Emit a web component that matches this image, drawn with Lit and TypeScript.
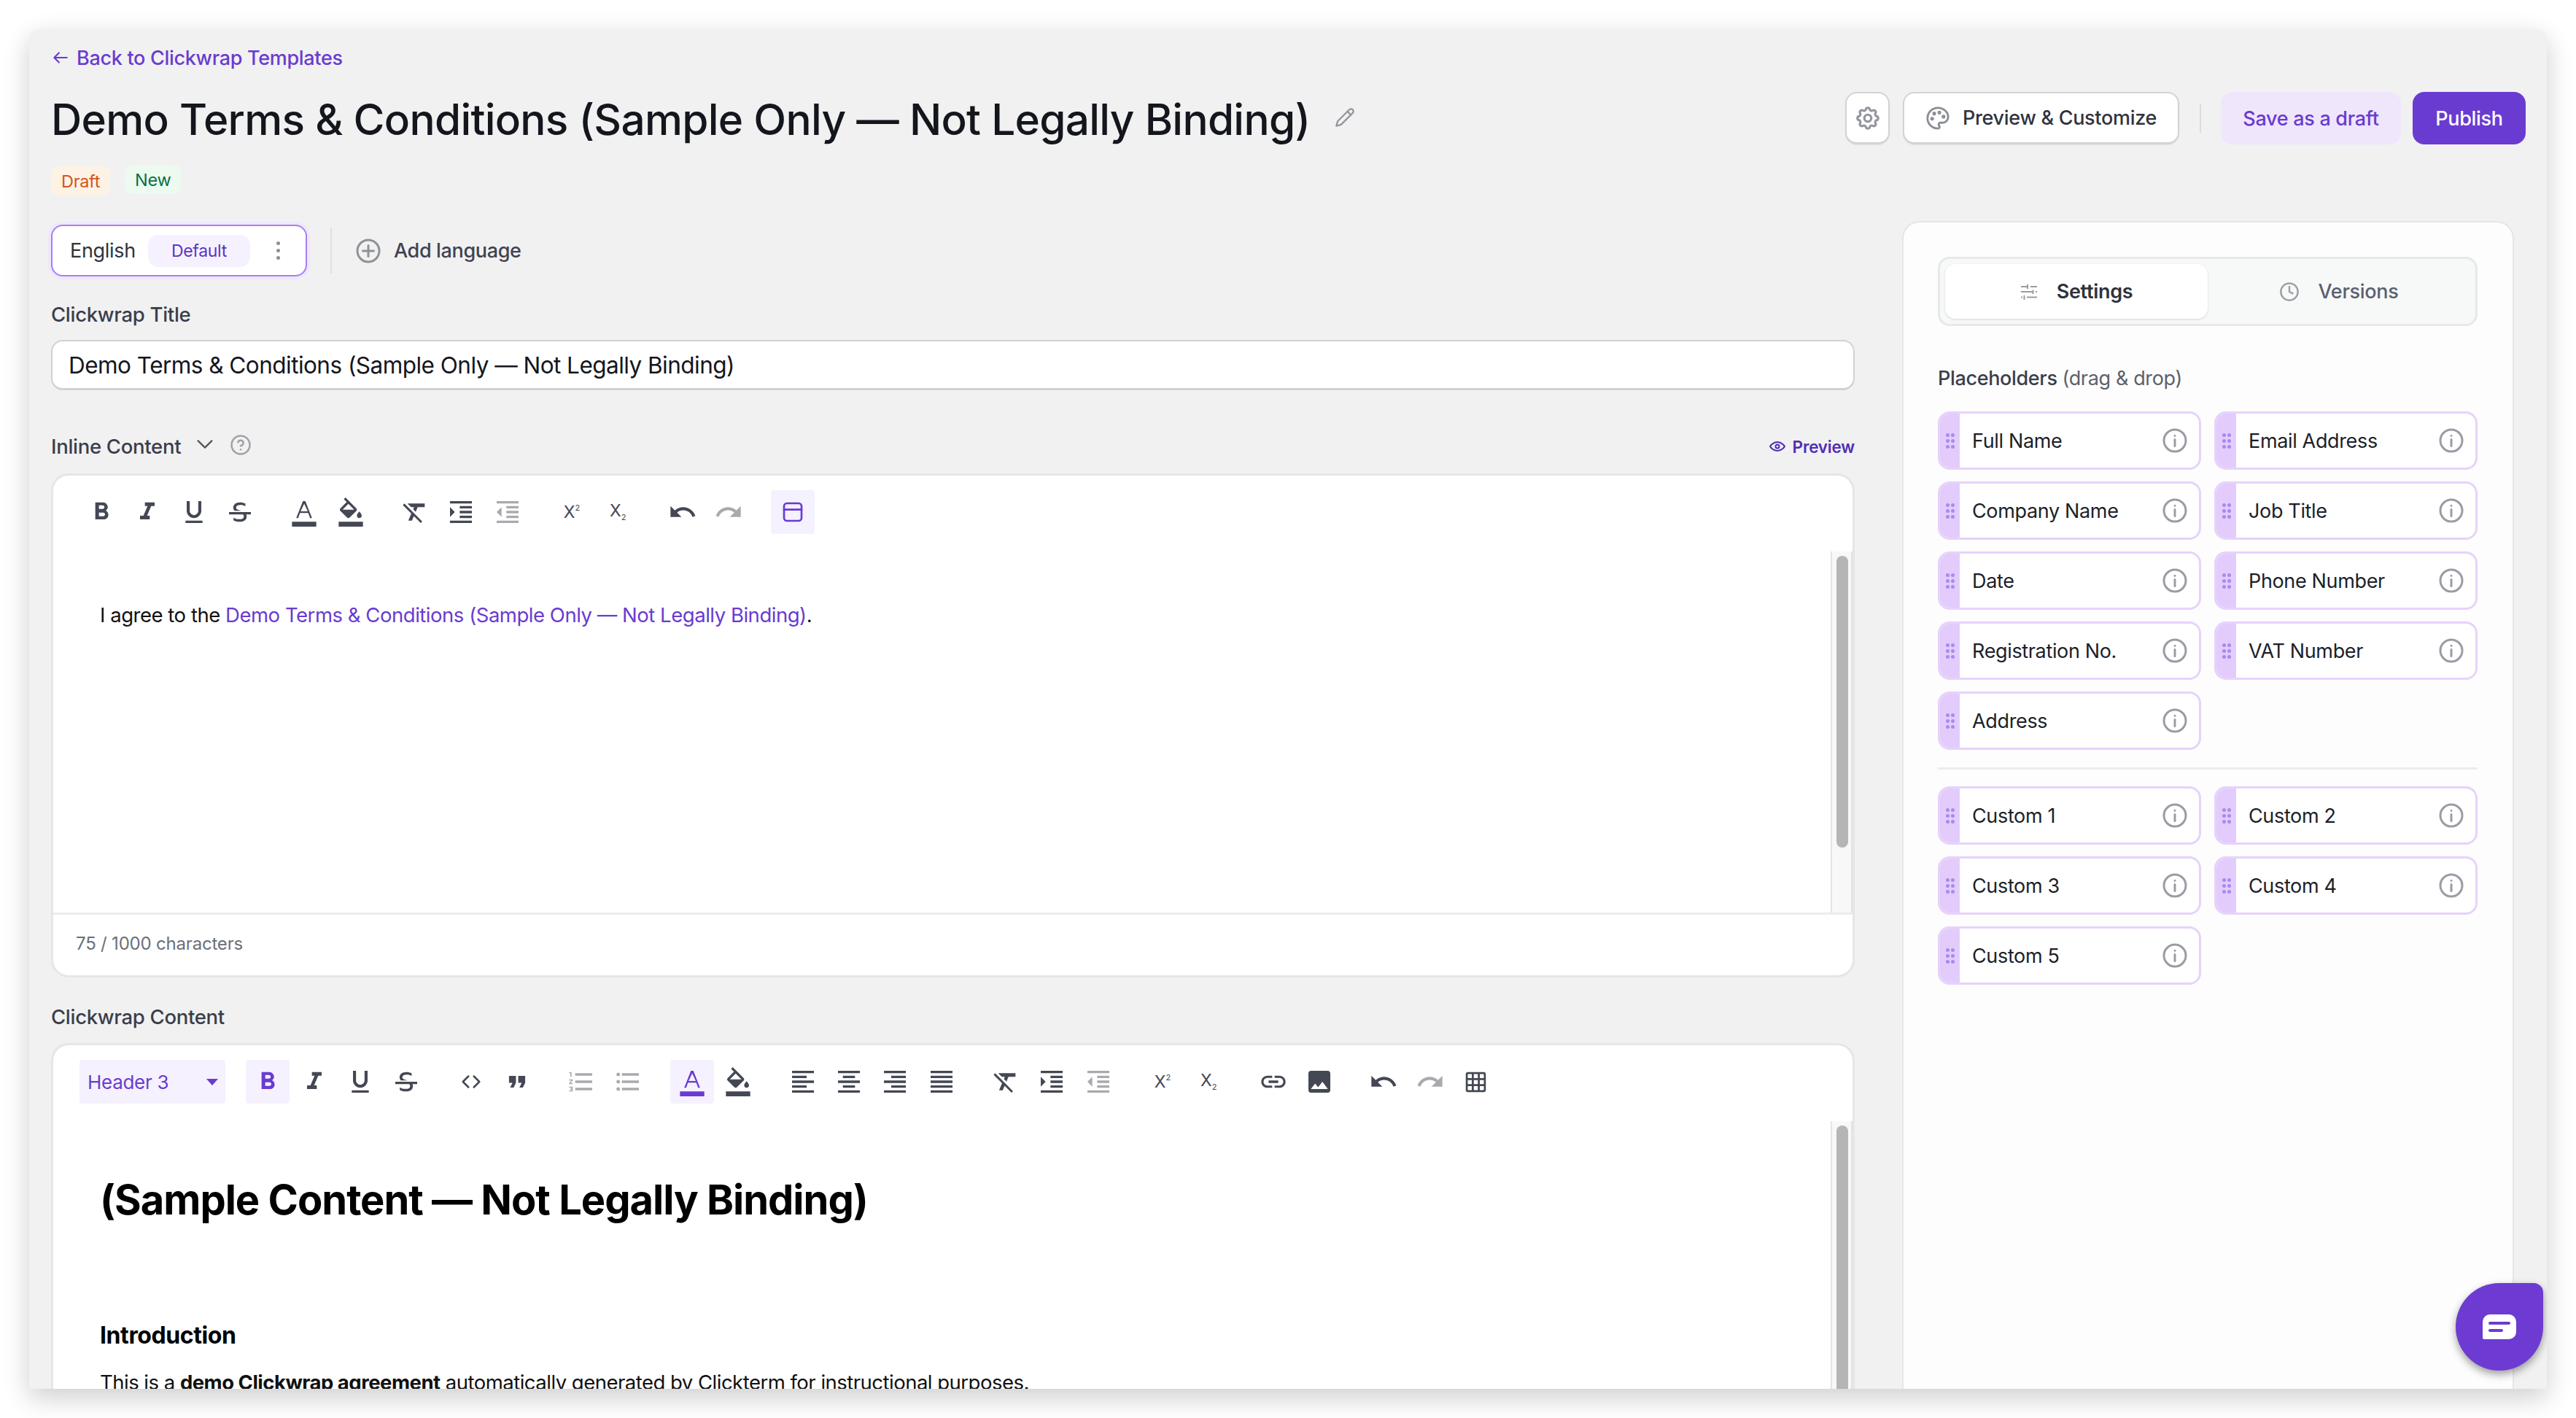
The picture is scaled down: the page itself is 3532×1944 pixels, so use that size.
import { LitElement, html, css, svg } from "lit";
import { customElement } from "lit/decorators.js";

const MI: Record<string, string> = {
  bold: "M15.6 10.79c.97-.67 1.65-1.77 1.65-2.79 0-2.26-1.75-4-4-4H7v14h7.04c2.09 0 3.71-1.7 3.71-3.79 0-1.52-.86-2.82-2.15-3.42zM10 6.5h3c.83 0 1.5.67 1.5 1.5s-.67 1.5-1.5 1.5h-3v-3zm3.5 9H10v-3h3.5c.83 0 1.5.67 1.5 1.5s-.67 1.5-1.5 1.5z",
  italic: "M10 4v3h2.21l-3.42 8H6v3h8v-3h-2.21l3.42-8H18V4z",
  underline: "M12 17c3.31 0 6-2.69 6-6V3h-2.5v8c0 1.93-1.57 3.5-3.5 3.5S8.5 12.93 8.5 11V3H6v8c0 3.31 2.69 6 6 6zm-7 2v2h14v-2H5z",
  strike: "M17.154 14c.23.516.346 1.09.346 1.72 0 1.342-.524 2.392-1.571 3.147C14.88 19.622 13.433 20 11.586 20c-1.64 0-3.263-.381-4.87-1.144V16.6c1.52.877 3.075 1.316 4.666 1.316 2.551 0 3.83-.732 3.839-2.197a2.21 2.21 0 0 0-.648-1.603l-.12-.117H3v-2h18v2h-3.846zm-4.078-3H7.629a4.086 4.086 0 0 1-.481-.522C6.716 9.92 6.5 9.246 6.5 8.452c0-1.236.466-2.287 1.397-3.153C8.83 4.433 10.271 4 12.222 4c1.471 0 2.879.328 4.222.984v2.152c-1.2-.687-2.515-1.03-3.946-1.03-2.48 0-3.719.782-3.719 2.346 0 .42.218.786.654 1.099.436.313.974.562 1.613.75.62.18 1.297.414 2.03.699z",
  color: "M2 20h20v4H2v-4zm3.49-3h1.6l1.5-4.2h6.8l1.5 4.2h1.6L13 3h-2L5.49 17zm3.6-5.6L12 5.2h.1l2.9 6.2H9.09z",
  fill: "M16.56 8.94L7.62 0 6.21 1.41l2.38 2.38-5.15 5.15c-.59.59-.59 1.54 0 2.12l5.5 5.5c.29.29.68.44 1.06.44s.77-.15 1.06-.44l5.5-5.5c.59-.58.59-1.53 0-2.11zM5.21 10L10 5.21 14.79 10H5.21zM19 11.5s-2 2.17-2 3.5c0 1.1.9 2 2 2s2-.9 2-2c0-1.33-2-3.5-2-3.5zM2 20h20v4H2z",
  clear: "M3.27 5L2 6.27l6.97 6.97L6.5 19h3l1.57-3.66L16.73 21 18 19.73 3.55 5.27 3.27 5zM6 5v.18L8.82 8h2.4l-.72 1.68 2.1 2.1L14.21 8H20V5H6z",
  indent: "M3 21h18v-2H3v2zM3 8v8l4-4-4-4zm8 9h10v-2H11v2zM3 3v2h18V3H3zm8 6h10V7H11v2zm0 4h10v-2H11v2z",
  outdent: "M11 17h10v-2H11v2zm-8-5l4 4V8l-4 4zm0 9h18v-2H3v2zM3 3v2h18V3H3zm8 6h10V7H11v2zm0 4h10v-2H11v2z",
  undo: "M12.5 8c-2.65 0-5.05.99-6.9 2.6L2 7v9h9l-3.62-3.62c1.39-1.16 3.16-1.88 5.12-1.88 3.54 0 6.55 2.31 7.6 5.5l2.37-.78C21.08 11.03 17.15 8 12.5 8z",
  redo: "M18.4 10.6C16.55 8.99 14.15 8 11.5 8c-4.65 0-8.58 3.03-9.96 7.22L3.9 16c1.05-3.19 4.05-5.5 7.6-5.5 1.95 0 3.73.72 5.12 1.88L13 16h9V7l-3.6 3.6z",
  left: "M15 15H3v2h12v-2zm0-8H3v2h12V7zM3 13h18v-2H3v2zm0 8h18v-2H3v2zM3 3v2h18V3H3z",
  center: "M7 15v2h10v-2H7zm-4 6h18v-2H3v2zm0-8h18v-2H3v2zm4-6v2h10V7H7zM3 3v2h18V3H3z",
  right: "M3 21h18v-2H3v2zm6-4h12v-2H9v2zm-6-4h18v-2H3v2zm6-4h12V7H9v2zM3 3v2h18V3H3z",
  justify: "M3 21h18v-2H3v2zm0-4h18v-2H3v2zm0-4h18v-2H3v2zm0-4h18V7H3v2zm0-6v2h18V3H3z",
  ol: "M2 17h2v.5H3v1h1v.5H2v1h3v-4H2v1zm1-9h1V4H2v1h1v3zm-1 3h1.8L2 13.1v.9h3v-1H3.2L5 10.9V10H2v1zm5-6v2h14V5H7zm0 14h14v-2H7v2zm0-6h14v-2H7v2z",
  ul: "M4 10.5c-.83 0-1.5.67-1.5 1.5s.67 1.5 1.5 1.5 1.5-.67 1.5-1.5-.67-1.5-1.5-1.5zm0-6c-.83 0-1.5.67-1.5 1.5S3.17 7.5 4 7.5 5.5 6.83 5.5 6 4.83 4.5 4 4.5zm0 12c-.83 0-1.5.68-1.5 1.5s.68 1.5 1.5 1.5 1.5-.68 1.5-1.5-.67-1.5-1.5-1.5zM7 19h14v-2H7v2zm0-6h14v-2H7v2zm0-8v2h14V5H7z",
  link: "M3.9 12c0-1.71 1.39-3.1 3.1-3.1h4V7H7c-2.76 0-5 2.24-5 5s2.24 5 5 5h4v-1.9H7c-1.71 0-3.1-1.39-3.1-3.1zM8 13h8v-2H8v2zm9-6h-4v1.9h4c1.71 0 3.1 1.39 3.1 3.1s-1.39 3.1-3.1 3.1h-4V17h4c2.76 0 5-2.24 5-5s-2.24-5-5-5z",
  image: "M21 19V5c0-1.1-.9-2-2-2H5c-1.1 0-2 .9-2 2v14c0 1.1.9 2 2 2h14c1.1 0 2-.9 2-2zM8.5 13.5l2.5 3.01L14.5 12l4.5 6H5l3.5-4.5z",
  quote: "M6 17h3l2-4V7H5v6h3zm8 0h3l2-4V7h-6v6h3z",
  table: "M20 2H4c-1.1 0-2 .9-2 2v16c0 1.1.9 2 2 2h16c1.1 0 2-.9 2-2V4c0-1.1-.9-2-2-2zM8 20H4v-4h4v4zm0-6H4v-4h4v4zm0-6H4V4h4v4zm6 12h-4v-4h4v4zm0-6h-4v-4h4v4zm0-6h-4V4h4v4zm6 12h-4v-4h4v4zm0-6h-4v-4h4v4zm0-6h-4V4h4v4z",
};

const line = (paths: unknown, size: number, cls = "") => html`<svg class="ln ${cls}" width=${size} height=${size} viewBox="0 0 24 24">${paths}</svg>`;

const ICONS = {
  back: svg`<path d="M20 12H4M10 6l-6 6 6 6"/>`,
  pencil: svg`<path d="M17 3a2.85 2.83 0 1 1 4 4L7.5 20.5 2 22l1.5-5.5Z"/><path d="m15 5 4 4"/>`,
  gear: svg`<path d="M10.325 4.317c.426-1.756 2.924-1.756 3.35 0a1.724 1.724 0 0 0 2.573 1.066c1.543-.94 3.31.826 2.37 2.37a1.724 1.724 0 0 0 1.065 2.572c1.756.426 1.756 2.924 0 3.35a1.724 1.724 0 0 0-1.066 2.573c.94 1.543-.826 3.31-2.37 2.37a1.724 1.724 0 0 0-2.572 1.065c-.426 1.756-2.924 1.756-3.35 0a1.724 1.724 0 0 0-2.573-1.066c-1.543.94-3.31-.826-2.37-2.37a1.724 1.724 0 0 0-1.065-2.572c-1.756-.426-1.756-2.924 0-3.35a1.724 1.724 0 0 0 1.066-2.573c-.94-1.543.826-3.31 2.37-2.37 1 .608 2.296.07 2.572-1.065z"/><circle cx="12" cy="12" r="3"/>`,
  palette: svg`<path d="M12 2C6.5 2 2 6.5 2 12s4.5 10 10 10c.926 0 1.648-.746 1.648-1.688 0-.437-.18-.835-.437-1.125-.29-.289-.438-.652-.438-1.125a1.64 1.64 0 0 1 1.668-1.668h1.996c3.051 0 5.555-2.503 5.555-5.554C21.965 6.012 17.461 2 12 2z"/><circle cx="13.5" cy="6.5" r=".8"/><circle cx="17.5" cy="10.5" r=".8"/><circle cx="8.5" cy="7.5" r=".8"/><circle cx="6.5" cy="12.5" r=".8"/>`,
  plus: svg`<circle cx="12" cy="12" r="10"/><path d="M12 7v10M7 12h10"/>`,
  chevron: svg`<path d="m4 8 8 8 8-8"/>`,
  help: svg`<circle cx="12" cy="12" r="10"/><path d="M9.09 9a3 3 0 0 1 5.83 1c0 2-3 3-3 3"/><path d="M12 17h.01"/>`,
  eye: svg`<path d="M2 12s3.5-6 10-6 10 6 10 6-3.5 6-10 6-10-6-10-6Z"/><circle cx="12" cy="12" r="2.5"/>`,
  sliders: svg`<path d="M1 5h8M14 5h9M10 2v6M1 12h16M21 12h2M17.500 9.500v5.500M1 19.500h2M9 19.500h14M5.500 17v6"/>`,
  clock: svg`<circle cx="12" cy="12" r="10"/><path d="M12 6v6l4 2"/>`,
  info: svg`<circle cx="12" cy="12" r="10"/><path d="M12 11v6M12 7.500h.01"/>`,
  layout: svg`<rect x="3" y="3" width="18" height="18" rx="3"/><path d="M3 9.500h18"/>`,
  code: svg`<path d="M9 6l-6 6 6 6M15 6l6 6-6 6"/>`,
};

type Tool = { k: string; on?: boolean; dim?: boolean; size?: number };

const T = (k: string, opts: Partial<Tool> = {}): Tool => ({ k, ...opts });

const INLINE_TOOLS: Tool[][] = [
  [T("bold"), T("italic"), T("underline"), T("strike")],
  [T("color"), T("fill")],
  [T("clear"), T("indent"), T("outdent", { dim: true })],
  [T("sup"), T("sub")],
  [T("undo"), T("redo", { dim: true })],
  [T("layout", { on: true })],
];

const CONTENT_TOOLS: Tool[][] = [
  [T("bold", { on: true }), T("italic"), T("underline"), T("strike")],
  [T("code"), T("quote", { size: 38 })],
  [T("ol", { dim: true }), T("ul", { dim: true })],
  [T("color", { on: true }), T("fill")],
  [T("left"), T("center"), T("right"), T("justify")],
  [T("clear"), T("indent"), T("outdent", { dim: true })],
  [T("sup"), T("sub")],
  [T("link"), T("image")],
  [T("undo"), T("redo", { dim: true }), T("table", { size: 33 })],
];

const PLACEHOLDERS = ["Full Name", "Email Address", "Company Name", "Job Title", "Date", "Phone Number", "Registration No.", "VAT Number", "Address"];
const CUSTOMS = ["Custom 1", "Custom 2", "Custom 3", "Custom 4", "Custom 5"];

const TITLE = "Demo Terms & Conditions (Sample Only — Not Legally Binding)";

@customElement("app-root")
export class AppRoot extends LitElement {
  static styles = css`
    :host {
      display: block;
      width: 3532px;
      height: 1944px;
      overflow: hidden;
      background: #fff;
      font-family: Inter, "Noto Sans", sans-serif;
      color: #1b1e27;
    }
    .stage {
      padding: 40px;
      box-sizing: border-box;
      height: 1944px;
    }
    .window {
      position: relative;
      height: 1864px;
      background: #f1f1f1;
      overflow: hidden;
      border-radius: 14px 14px 0 0;
    }
    .shadow {
      box-shadow: 0 12px 36px rgba(0, 0, 0, 0.2);
      height: 1864px;
      border-radius: 14px 14px 0 0;
    }
    svg.ln {
      fill: none;
      stroke: currentColor;
      stroke-width: 2;
      stroke-linecap: round;
      stroke-linejoin: round;
      flex: none;
    }

    header {
      display: flex;
      justify-content: space-between;
      padding: 21px 29px 35px 30px;
    }
    .back {
      display: flex;
      align-items: center;
      gap: 9px;
      height: 36px;
      color: #6a3bd1;
      font-size: 27px;
      font-weight: 500;
      letter-spacing: -0.3px;
    }
    .title-row {
      display: flex;
      align-items: center;
      gap: 34px;
      height: 72px;
      margin-top: 30px;
    }
    h1 {
      margin: 0;
      font-size: 58.5px;
      font-weight: 500;
      letter-spacing: -0.7px;
      color: #14161d;
      white-space: nowrap;
    }
    .pencil {
      color: #94969e;
    }
    .badges {
      display: flex;
      align-items: flex-start;
      gap: 20px;
      margin-top: 27px;
      height: 42px;
    }
    .badge {
      display: flex;
      align-items: center;
      height: 40px;
      padding: 0 14px;
      border-radius: 10px;
      font-size: 23.5px;
      letter-spacing: -0.3px;
    }
    .draft {
      margin-top: 2px;
      background: #fdf2e4;
      color: #d4541a;
    }
    .new {
      background: #ecfaf0;
      color: #08703f;
    }
    .actions {
      display: flex;
      align-items: center;
      margin-top: 65px;
      height: 72px;
      font-size: 27px;
      font-weight: 500;
      letter-spacing: -0.3px;
    }
    .btn {
      display: flex;
      align-items: center;
      justify-content: center;
      box-sizing: border-box;
      height: 72px;
      border-radius: 16px;
    }
    .btn.outline {
      background: #fff;
      border: 2px solid #d2d3d8;
      border-bottom-width: 3px;
      color: #30333d;
      box-shadow: 0 1px 2px rgba(0, 0, 0, 0.06);
    }
    .btn.outline.gear {
      width: 61px;
      color: #94969e;
    }
    .customize {
      width: 379px;
      gap: 17px;
      margin-left: 18px;
    }
    .customize svg {
      color: #8a8d96;
    }
    .vbar {
      width: 2px;
      height: 40px;
      background: #dcdcdf;
      margin: 0 27px 0 28px;
    }
    .draft-btn {
      width: 247px;
      background: #efe6fc;
      color: #6a3bd1;
    }
    .publish {
      width: 155px;
      margin-left: 16px;
      background: #6a3bd1;
      color: #fff;
    }

    main {
      display: flex;
      gap: 65px;
      padding: 0 45px 0 30px;
    }
    .left {
      flex: 1;
      padding-top: 5px;
      min-width: 0;
    }
    .lang-row {
      display: flex;
      align-items: center;
      height: 71px;
    }
    .lang {
      display: flex;
      align-items: center;
      box-sizing: border-box;
      width: 351px;
      height: 71px;
      padding-left: 24px;
      background: #fff;
      border: 2px solid #a67df2;
      border-radius: 16px;
      box-shadow: 0 0 0 4px #efe7fd;
      font-size: 27px;
      color: #30333d;
      letter-spacing: -0.3px;
    }
    .pill {
      display: flex;
      align-items: center;
      justify-content: center;
      width: 140px;
      height: 44px;
      margin-left: 17px;
      border-radius: 14px;
      background: #f5f1fe;
      color: #5b34c4;
      font-size: 23px;
      letter-spacing: -0.3px;
    }
    .kebab {
      display: flex;
      flex-direction: column;
      gap: 5px;
      margin-left: 36px;
    }
    .kebab i {
      width: 5px;
      height: 5px;
      border-radius: 50%;
      background: #8c8e96;
    }
    .lang-sep {
      width: 2px;
      height: 63px;
      margin: 0 32px;
      background: #e0e0e2;
    }
    .add {
      display: flex;
      align-items: center;
      gap: 17px;
      font-size: 27px;
      font-weight: 500;
      letter-spacing: -0.35px;
      color: #3f4350;
    }
    .add svg {
      color: #8f9199;
    }
    .label {
      display: flex;
      align-items: center;
      height: 36px;
      font-size: 27.5px;
      font-weight: 500;
      letter-spacing: -0.3px;
      color: #3a3e4a;
    }
    .input {
      display: flex;
      align-items: center;
      box-sizing: border-box;
      height: 69px;
      margin-top: 17px;
      padding-left: 22px;
      background: #fff;
      border: 2px solid #d0d1d6;
      border-bottom-width: 3px;
      border-radius: 16px;
      font-size: 31.500px;
      letter-spacing: -0.53px;
      color: #14161d;
    }
    .inline-head {
      margin-top: 59px;
      gap: 11px;
    }
    .inline-head .chev {
      margin-left: 8px;
      color: #55585f;
    }
    .inline-head .q {
      margin: 2px 0 0 9px;
      color: #a0a2a8;
    }
    .preview {
      display: flex;
      align-items: center;
      gap: 9px;
      margin-left: auto;
      font-size: 22.5px;
      font-weight: 600;
      letter-spacing: -0.2px;
      color: #4f2db5;
    }
    .card {
      background: #fff;
      border: 3px solid #e6e6e6;
      border-radius: 24px;
      overflow: hidden;
    }
    .card.inline {
      margin-top: 19px;
    }
    .card.content {
      margin-top: 18px;
    }
    .toolbar {
      display: flex;
      gap: 28.4px;
      padding: 20px 36px 24px;
    }
    .group {
      display: flex;
      gap: 3.3px;
    }
    .tb {
      display: flex;
      align-items: center;
      justify-content: center;
      width: 60px;
      height: 60px;
      border-radius: 4px;
      color: #444854;
    }
    .tb svg.mi {
      fill: currentColor;
    }
    .tb.dim {
      color: #a9aaae;
    }
    .tb.on {
      background: #f5f1fe;
      color: #6a3bd1;
    }
    .tb .script {
      font-size: 23px;
      line-height: 1;
    }
    .tb .script span {
      font-size: 11px;
      vertical-align: 10px;
    }
    .tb .script span.down {
      vertical-align: -5px;
    }
    .select {
      display: flex;
      align-items: center;
      justify-content: space-between;
      box-sizing: border-box;
      width: 200px;
      height: 60px;
      padding: 0 10px 0 11px;
      border-radius: 4px;
      background: #f5f1fe;
      color: #6a3bd1;
      font-size: 26px;
      letter-spacing: -0.3px;
    }
    .select i {
      width: 0;
      height: 0;
      border-left: 8px solid transparent;
      border-right: 8px solid transparent;
      border-top: 9px solid #6a3bd1;
    }
    .editor {
      display: flex;
    }
    .body {
      flex: 1;
      min-width: 0;
      padding-left: 64px;
      font-size: 27.5px;
      line-height: 42px;
      letter-spacing: -0.47px;
      color: #111;
    }
    .inline .body {
      padding-top: 66px;
    }
    .inline .editor {
      height: 495px;
    }
    .content .editor {
      height: 600px;
    }
    .content .body {
      padding-top: 73px;
    }
    .body a {
      color: #6a3bd1;
    }
    .body h3 {
      margin: 0;
      font-size: 56px;
      line-height: 70px;
      font-weight: 700;
      letter-spacing: -1px;
      color: #000;
    }
    .body h4 {
      margin: 126px 0 18px;
      font-size: 32px;
      line-height: 50px;
      font-weight: 700;
      letter-spacing: -0.4px;
      color: #000;
    }
    .body p {
      margin: 0;
      letter-spacing: -0.51px;
    }
    .body b {
      font-weight: 700;
    }
    .track {
      position: relative;
      box-sizing: border-box;
      flex: none;
      width: 30px;
      background: #f8f8f8;
      border-left: 2px solid #e4e4e4;
      border-right: 2px solid #e4e4e4;
    }
    .thumb {
      margin: 6px 4px 0 6px;
      height: 400px;
      border-radius: 8px;
      background: #b5b5b5;
    }
    .count {
      display: flex;
      align-items: center;
      height: 86px;
      padding: 0 0 4px 31px;
      border-top: 3px solid #ececec;
      box-sizing: border-box;
      font-size: 24px;
      letter-spacing: -0.2px;
      color: #6b6f78;
    }

    .panel {
      box-sizing: border-box;
      width: 839px;
      height: 1640px;
      padding: 47px 48px 47px 47px;
      background: #fdfdfd;
      border: 2px solid #e6e6e6;
      border-radius: 24px;
    }
    .tabs {
      display: flex;
      box-sizing: border-box;
      height: 95px;
      padding: 7px;
      background: #f7f8f8;
      border: 3px solid #e6e8e9;
      border-radius: 16px;
    }
    .tab {
      flex: 1;
      display: flex;
      align-items: center;
      justify-content: center;
      gap: 25px;
      border-radius: 14px;
      font-size: 27px;
      letter-spacing: -0.3px;
      color: #596070;
      font-weight: 500;
    }
    .tab svg {
      color: #9a9ca5;
    }
    .tab.on {
      background: #fff;
      color: #2f323c;
      font-weight: 600;
      box-shadow: 0 1px 3px rgba(0, 0, 0, 0.14);
    }
    .tab.on svg {
      stroke-linecap: butt;
      margin-right: 1px;
    }
    .ph-title {
      height: 36px;
      line-height: 36px;
      margin-top: 54px;
      font-size: 27px;
      font-weight: 500;
      letter-spacing: -0.35px;
      color: #3a3e4a;
    }
    .ph-title span {
      font-weight: 400;
      color: #5d616c;
    }
    .chips {
      display: grid;
      grid-template-columns: 1fr 1fr;
      gap: 16px 18px;
    }
    .chips.first {
      margin-top: 27px;
    }
    .chip {
      display: flex;
      align-items: center;
      box-sizing: border-box;
      height: 80px;
      background: #fff;
      border: 3px solid #e6d3fb;
      border-radius: 16px;
      overflow: hidden;
      font-size: 27px;
      letter-spacing: -0.35px;
      color: #1c1f29;
    }
    .grip {
      display: grid;
      grid-template-columns: 5px 5px;
      gap: 3px 2px;
      align-content: center;
      justify-content: center;
      flex: none;
      width: 27px;
      height: 100%;
      background: #e3ccfc;
    }
    .grip i {
      width: 5px;
      height: 5px;
      border-radius: 50%;
      background: #a88af0;
    }
    .chip .name {
      flex: 1;
      padding-left: 17px;
    }
    .chip svg {
      margin-right: 15px;
      color: #9a9ca5;
    }
    .rule {
      height: 3px;
      margin: 24px 0 23px;
      background: #ececec;
    }

    .chat {
      position: absolute;
      right: 5px;
      bottom: 25px;
      display: flex;
      align-items: center;
      justify-content: center;
      width: 120px;
      height: 120px;
      background: #6d3bd1;
      border-radius: 50% 13px 50% 50%;
      box-shadow: 0 5px 12px rgba(0, 0, 0, 0.38);
    }
    .chat .bubble {
      display: flex;
      flex-direction: column;
      justify-content: center;
      gap: 6px;
      box-sizing: border-box;
      width: 46px;
      height: 34px;
      padding-left: 8px;
      background: #fff;
      border-radius: 10px 10px 10px 2px;
    }
    .chat .bubble i {
      display: block;
      height: 4px;
      width: 30px;
      border-radius: 2px;
      background: #6d3bd1;
    }
    .chat .bubble i + i {
      width: 20px;
    }
  `;

  private renderTool(t: Tool) {
    const size = t.size ?? 40;
    let icon;
    if (t.k === "sup") {
      icon = html`<span class="script">X<span>2</span></span>`;
    } else if (t.k === "sub") {
      icon = html`<span class="script">X<span class="down">2</span></span>`;
    } else if (t.k === "layout") {
      icon = line(ICONS.layout, 32);
    } else if (t.k === "code") {
      icon = line(ICONS.code, 30, "code");
    } else {
      icon = html`<svg class="mi" width=${size} height=${size} viewBox="0 0 24 24"><path d=${MI[t.k]}></path></svg>`;
    }
    return html`<div class="tb ${t.on ? "on" : ""} ${t.dim ? "dim" : ""}">${icon}</div>`;
  }

  private renderGroups(groups: Tool[][]) {
    return groups.map((g) => html`<div class="group">${g.map((t) => this.renderTool(t))}</div>`);
  }

  private renderChip(name: string) {
    return html`<div class="chip">
      <div class="grip">${[0, 1, 2, 3, 4, 5].map(() => html`<i></i>`)}</div>
      <span class="name">${name}</span>
      ${line(ICONS.info, 36)}
    </div>`;
  }

  render() {
    return html`
      <div class="stage">
        <div class="shadow">
          <div class="window">
            <header>
              <div>
                <div class="back">${line(ICONS.back, 26)}Back to Clickwrap Templates</div>
                <div class="title-row">
                  <h1>${TITLE}</h1>
                  <span class="pencil">${line(ICONS.pencil, 28)}</span>
                </div>
                <div class="badges">
                  <span class="badge draft">Draft</span>
                  <span class="badge new">New</span>
                </div>
              </div>
              <div class="actions">
                <div class="btn outline gear">${line(ICONS.gear, 38)}</div>
                <div class="btn outline customize">${line(ICONS.palette, 34)}Preview &amp; Customize</div>
                <div class="vbar"></div>
                <div class="btn draft-btn">Save as a draft</div>
                <div class="btn publish">Publish</div>
              </div>
            </header>
            <main>
              <div class="left">
                <div class="lang-row">
                  <div class="lang">
                    English
                    <span class="pill">Default</span>
                    <span class="kebab"><i></i><i></i><i></i></span>
                  </div>
                  <div class="lang-sep"></div>
                  <div class="add">${line(ICONS.plus, 36)}Add language</div>
                </div>
                <div class="label" style="margin-top:34px">Clickwrap Title</div>
                <div class="input">${TITLE}</div>
                <div class="label inline-head">
                  Inline Content
                  <span class="chev">${line(ICONS.chevron, 28)}</span>
                  <span class="q">${line(ICONS.help, 30)}</span>
                  <span class="preview">${line(ICONS.eye, 24)}Preview</span>
                </div>
                <div class="card inline">
                  <div class="toolbar">${this.renderGroups(INLINE_TOOLS)}</div>
                  <div class="editor">
                    <div class="body">I agree to the <a>${TITLE}</a>.</div>
                    <div class="track"><div class="thumb"></div></div>
                  </div>
                  <div class="count">75 / 1000 characters</div>
                </div>
                <div class="label" style="margin-top:36px">Clickwrap Content</div>
                <div class="card content">
                  <div class="toolbar">
                    <div class="select">Header 3<i></i></div>
                    ${this.renderGroups(CONTENT_TOOLS)}
                  </div>
                  <div class="editor">
                    <div class="body">
                      <h3>(Sample Content — Not Legally Binding)</h3>
                      <h4>Introduction</h4>
                      <p>This is a <b>demo Clickwrap agreement</b> automatically generated by Clickterm for instructional purposes.</p>
                    </div>
                    <div class="track"><div class="thumb"></div></div>
                  </div>
                </div>
              </div>
              <aside class="panel">
                <div class="tabs">
                  <div class="tab on">${line(ICONS.sliders, 24)}Settings</div>
                  <div class="tab">${line(ICONS.clock, 28)}Versions</div>
                </div>
                <div class="ph-title">Placeholders <span>(drag &amp; drop)</span></div>
                <div class="chips first">${PLACEHOLDERS.map((p) => this.renderChip(p))}</div>
                <div class="rule"></div>
                <div class="chips">${CUSTOMS.map((p) => this.renderChip(p))}</div>
              </aside>
            </main>
            <div class="chat">
              <div class="bubble"><i></i><i></i></div>
            </div>
          </div>
        </div>
      </div>
    `;
  }
}
